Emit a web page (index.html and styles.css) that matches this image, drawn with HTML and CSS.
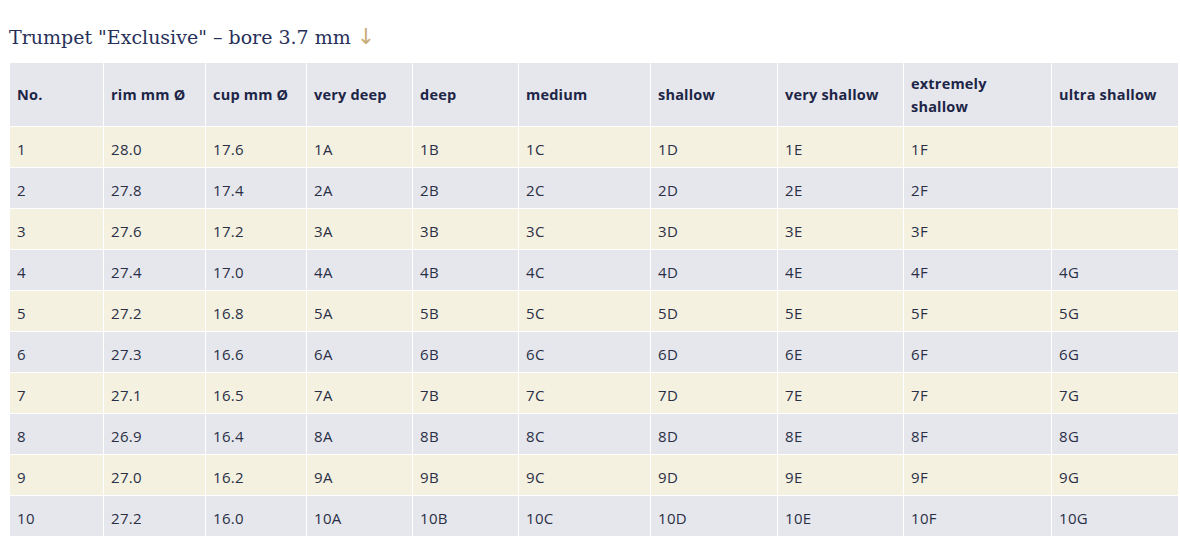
FILE: index.html
```html
<!DOCTYPE html>
<html>
<head>
<meta charset="utf-8">
<link rel="stylesheet" href="styles.css">
</head>
<body>
<div class="page">
  <h2 class="title">Trumpet "Exclusive" – bore 3.7 mm <span class="arrow">↓</span></h2>
  <table class="sizes">
    <colgroup>
      <col class="c1"><col class="c2"><col class="c3"><col class="c4"><col class="c5">
      <col class="c6"><col class="c7"><col class="c8"><col class="c9"><col class="c10">
    </colgroup>
    <thead>
      <tr>
        <th>No.</th><th>rim mm Ø</th><th>cup mm Ø</th><th>very deep</th><th>deep</th>
        <th>medium</th><th>shallow</th><th>very shallow</th><th>extremely<br>shallow</th><th>ultra shallow</th>
      </tr>
    </thead>
    <tbody>
      <tr class="odd"><td>1</td><td>28.0</td><td>17.6</td><td>1A</td><td>1B</td><td>1C</td><td>1D</td><td>1E</td><td>1F</td><td></td></tr>
      <tr><td>2</td><td>27.8</td><td>17.4</td><td>2A</td><td>2B</td><td>2C</td><td>2D</td><td>2E</td><td>2F</td><td></td></tr>
      <tr class="odd"><td>3</td><td>27.6</td><td>17.2</td><td>3A</td><td>3B</td><td>3C</td><td>3D</td><td>3E</td><td>3F</td><td></td></tr>
      <tr><td>4</td><td>27.4</td><td>17.0</td><td>4A</td><td>4B</td><td>4C</td><td>4D</td><td>4E</td><td>4F</td><td>4G</td></tr>
      <tr class="odd"><td>5</td><td>27.2</td><td>16.8</td><td>5A</td><td>5B</td><td>5C</td><td>5D</td><td>5E</td><td>5F</td><td>5G</td></tr>
      <tr><td>6</td><td>27.3</td><td>16.6</td><td>6A</td><td>6B</td><td>6C</td><td>6D</td><td>6E</td><td>6F</td><td>6G</td></tr>
      <tr class="odd"><td>7</td><td>27.1</td><td>16.5</td><td>7A</td><td>7B</td><td>7C</td><td>7D</td><td>7E</td><td>7F</td><td>7G</td></tr>
      <tr><td>8</td><td>26.9</td><td>16.4</td><td>8A</td><td>8B</td><td>8C</td><td>8D</td><td>8E</td><td>8F</td><td>8G</td></tr>
      <tr class="odd"><td>9</td><td>27.0</td><td>16.2</td><td>9A</td><td>9B</td><td>9C</td><td>9D</td><td>9E</td><td>9F</td><td>9G</td></tr>
      <tr><td>10</td><td>27.2</td><td>16.0</td><td>10A</td><td>10B</td><td>10C</td><td>10D</td><td>10E</td><td>10F</td><td>10G</td></tr>
    </tbody>
  </table>
</div>
</body>
</html>
```

FILE: styles.css
```css
html, body {
  margin: 0;
  padding: 0;
  background: #ffffff;
}
.page {
  padding: 24px 2px 0 9px;
}
.title {
  margin: 0 0 12px 0;
  font-family: "DejaVu Serif", "Liberation Serif", serif;
  font-weight: normal;
  font-size: 19px;
  line-height: 26px;
  color: #27305a;
}
.arrow {
  color: #c9ad78;
  font-family: "DejaVu Sans", sans-serif;
  font-size: 22px;
}
.sizes {
  border-collapse: collapse;
  table-layout: fixed;
  width: 1169px;
  font-family: "Open Sans", "Noto Sans", sans-serif;
  font-size: 15px;
  color: #2a2f45;
}
.c1 { width: 94px; }
.c2 { width: 102px; }
.c3 { width: 101px; }
.c4 { width: 106px; }
.c5 { width: 106px; }
.c6 { width: 132px; }
.c7 { width: 127px; }
.c8 { width: 126px; }
.c9 { width: 148px; }
.c10 { width: 127px; }
.sizes th, .sizes td {
  border: 1px solid #ffffff;
  text-align: left;
  padding: 0 7px;
  vertical-align: middle;
}
.sizes th {
  background: #e6e7ed;
  color: #1d2547;
  font-weight: 700;
  font-size: 14.5px;
  letter-spacing: 0.2px;
  height: 63px;
  line-height: 23px;
}
.sizes td {
  background: #e6e7ed;
  height: 37px;
  padding-top: 3px;
  line-height: 20px;
  letter-spacing: 0.3px;
}
.sizes tr.odd td {
  background: #f4f1e1;
}
```
